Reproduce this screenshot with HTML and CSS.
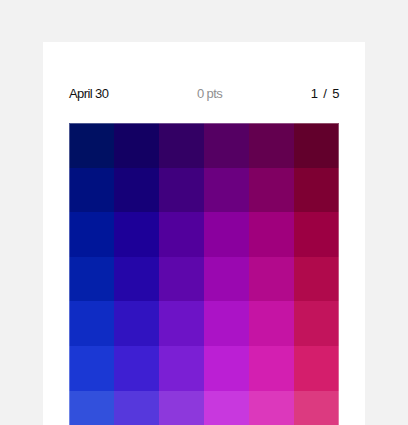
FILE: index.html
```html
<!DOCTYPE html>
<html lang="en">
<head>
<meta charset="UTF-8">
<meta name="viewport" content="width=device-width, initial-scale=1.0">
<link rel="stylesheet" href="styles.css">
<title>Colour grid</title>
</head>
<body>
  <div class="card">
    <div class="header">
      <span class="date">April 30</span>
      <span class="score">0 pts</span>
      <span class="count">1 / 5</span>
    </div>

    <div class="grid">
      <div class="cell" style="background:#001063"></div>
      <div class="cell" style="background:#130063"></div>
      <div class="cell" style="background:#330064"></div>
      <div class="cell" style="background:#550063"></div>
      <div class="cell" style="background:#63004f"></div>
      <div class="cell" style="background:#62002c"></div>

      <div class="cell" style="background:#001080"></div>
      <div class="cell" style="background:#150078"></div>
      <div class="cell" style="background:#40007e"></div>
      <div class="cell" style="background:#6b0080"></div>
      <div class="cell" style="background:#800062"></div>
      <div class="cell" style="background:#7e0033"></div>

      <div class="cell" style="background:#00169a"></div>
      <div class="cell" style="background:#1d0098"></div>
      <div class="cell" style="background:#52009c"></div>
      <div class="cell" style="background:#8a009e"></div>
      <div class="cell" style="background:#a0007d"></div>
      <div class="cell" style="background:#9c0043"></div>

      <div class="cell" style="background:#0420aa"></div>
      <div class="cell" style="background:#2506a8"></div>
      <div class="cell" style="background:#5e07ab"></div>
      <div class="cell" style="background:#9a08b0"></div>
      <div class="cell" style="background:#b20a8c"></div>
      <div class="cell" style="background:#b00a4c"></div>

      <div class="cell" style="background:#0f2cc4"></div>
      <div class="cell" style="background:#3113c0"></div>
      <div class="cell" style="background:#6d13c6"></div>
      <div class="cell" style="background:#ab13c6"></div>
      <div class="cell" style="background:#c514a4"></div>
      <div class="cell" style="background:#c2145c"></div>

      <div class="cell" style="background:#1b38d4"></div>
      <div class="cell" style="background:#3e1fd2"></div>
      <div class="cell" style="background:#7b1fd4"></div>
      <div class="cell" style="background:#bb1fd4"></div>
      <div class="cell" style="background:#d31fb1"></div>
      <div class="cell" style="background:#d41e6c"></div>

      <div class="cell" style="background:#3250dc"></div>
      <div class="cell" style="background:#5638dc"></div>
      <div class="cell" style="background:#8d38dc"></div>
      <div class="cell" style="background:#c838de"></div>
      <div class="cell" style="background:#dc38bc"></div>
      <div class="cell" style="background:#dc3a80"></div>
    </div>
  </div>
</body>
</html>
```

FILE: styles.css
```css
body {
  margin: 0;
  padding: 42px 0 0 43px;
  background-color: #f2f2f2;
  font-family: "Liberation Sans", Arial, sans-serif;
  overflow: hidden;
}

.card {
  width: 270px;
  padding: 44px 26px 40px;
  background-color: #fff;
}

.header {
  display: flex;
  justify-content: space-between;
  align-items: center;
  height: 14px;
  margin-bottom: 23px;
  font-size: 13px;
  letter-spacing: -0.6px;
  color: #111;
}

.score {
  color: #909090;
}

.count {
  word-spacing: 3px;
}

.grid {
  display: grid;
  grid-template-columns: repeat(6, 1fr);
  grid-auto-rows: 44.6px;
  outline: 1px solid rgba(255, 255, 255, 0.3);
  outline-offset: -1px;
}
```
